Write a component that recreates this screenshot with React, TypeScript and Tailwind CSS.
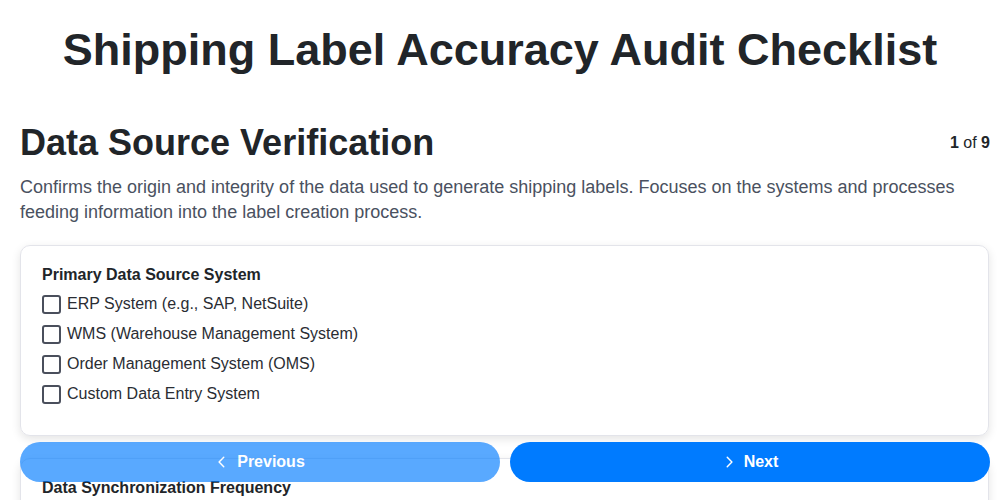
import React from "react";

const options = [
  "ERP System (e.g., SAP, NetSuite)",
  "WMS (Warehouse Management System)",
  "Order Management System (OMS)",
  "Custom Data Entry System",
];

const options2 = ["Real-time", "Hourly", "Daily", "Manual"];

function Check({ label }: { label: string }) {
  return (
    <label className="flex items-center gap-[6px] h-[30px]">
      <span className="w-[19px] h-[19px] border-2 border-[#4a4f5c] rounded-[3px] shrink-0" />
      <span className="text-[16px] text-[#2a2d33]">{label}</span>
    </label>
  );
}

export default function App() {
  return (
    <div className="h-screen overflow-hidden bg-white font-['Liberation_Sans',Arial,sans-serif] text-[#212529]">
      <h1 className="text-center text-[45px] leading-[56px] font-bold pt-[22px] text-[#212529]">
        Shipping Label Accuracy Audit Checklist
      </h1>
      <div className="pl-5 pr-[10px] pt-[43px] pb-[120px]">
        <div className="flex items-center justify-between">
          <h2 className="text-[36px] leading-[44px] font-bold text-[#212529]">Data Source Verification</h2>
          <div className="text-[16px] text-[#212529]">
            <span className="font-bold">1</span> of <span className="font-bold">9</span>
          </div>
        </div>
        <p className="mt-[10px] text-[18px] leading-[25px] text-[#4a5160]">
          Confirms the origin and integrity of the data used to generate shipping labels. Focuses on the systems and processes feeding information into the label creation process.
        </p>
        <div className="mt-[20px] flex flex-col gap-[22px]">
          <div className="mr-px border border-[#e3e4ea] rounded-[10px] shadow-[0_3px_10px_rgba(0,0,0,0.11)] px-[21px] pt-[18px] pb-[26px]">
            <div className="text-[16px] font-bold leading-[22px] mb-[3px]">Primary Data Source System</div>
            {options.map((o) => (
              <Check key={o} label={o} />
            ))}
          </div>
          <div className="mr-px border border-[#e3e4ea] rounded-[10px] shadow-[0_3px_10px_rgba(0,0,0,0.11)] px-[21px] pt-[18px] pb-[26px]">
            <div className="text-[16px] font-bold leading-[22px] mb-[3px]">Data Synchronization Frequency</div>
            {options2.map((o) => (
              <Check key={o} label={o} />
            ))}
          </div>
        </div>
      </div>
      <div className="fixed left-0 right-0 bottom-[18px] pl-5 pr-[10px] flex gap-[10px]">
        <button className="flex-1 h-[40px] rounded-[20px] bg-[#007bff] opacity-65 text-white font-bold text-[16px] flex items-center justify-center gap-[8px]">
          <svg width="14" height="14" viewBox="0 0 24 24" fill="none" stroke="currentColor" strokeWidth="2.5" strokeLinecap="round" strokeLinejoin="round">
            <path d="M15 4l-8 8 8 8" />
          </svg>
          Previous
        </button>
        <button className="flex-1 h-[40px] rounded-[20px] bg-[#007bff] text-white font-bold text-[16px] flex items-center justify-center gap-[8px]">
          <svg width="14" height="14" viewBox="0 0 24 24" fill="none" stroke="currentColor" strokeWidth="2.5" strokeLinecap="round" strokeLinejoin="round">
            <path d="M9 4l8 8-8 8" />
          </svg>
          Next
        </button>
      </div>
    </div>
  );
}
